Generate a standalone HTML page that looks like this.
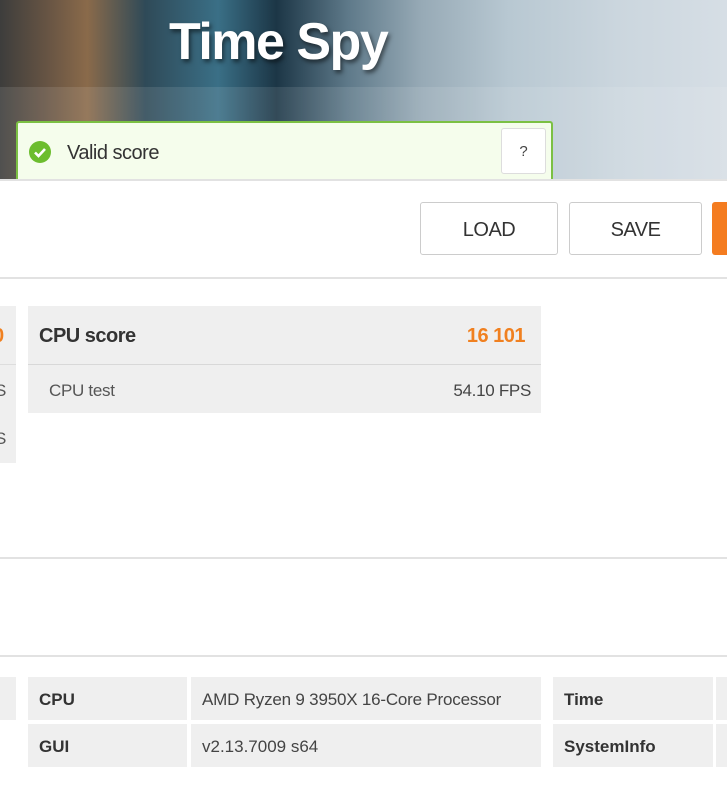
<!DOCTYPE html>
<html><head><meta charset="utf-8"><style>
*{margin:0;padding:0;box-sizing:border-box}
body{width:727px;height:795px;overflow:hidden;background:#fff;font-family:"Liberation Sans",sans-serif;position:relative;color:#333}
.a{position:absolute}
.hdr{left:0;top:0;width:727px;height:180px;background:linear-gradient(90deg,#3d3d3c 0%,#6a5644 7%,#8a6a4a 12%,#2f4a58 20%,#3a6f86 30%,#1c3646 38%,#5f7a8a 48%,#97aab6 58%,#b8c8d2 70%,#cbd6de 85%,#d6dee5 100%)}
.ov{left:0;top:87px;width:727px;height:93px;background:rgba(255,255,255,0.1)}
.title{left:169px;top:12px;font-size:52px;font-weight:bold;color:#fff;text-shadow:2px 3px 4px rgba(0,0,0,.5);letter-spacing:-1.5px}
.valid{left:16px;top:121px;width:537px;height:60px;background:#f5fdec;border:2px solid #7bc043;border-bottom:none;border-radius:3px 3px 0 0}
.q{left:501px;top:128px;width:45px;height:46px;background:#fff;border:1px solid #ddd;border-radius:3px;font-size:15px;text-align:center;line-height:46px;color:#444}
.line{left:0;width:727px;height:2px;background:#e2e2e2}
.btn{top:202px;height:53px;border:1px solid #ccc;border-radius:3px;background:#fff;font-size:20px;text-align:center;line-height:55px;color:#333;letter-spacing:-.5px}
.g{background:#efefef}
</style></head><body>
<div class="a hdr"></div>
<div class="a ov"></div>
<div class="a title">Time Spy</div>
<div class="a valid"></div>
<svg class="a" style="left:29px;top:141px" width="22" height="22" viewBox="0 0 22 22"><circle cx="11" cy="11" r="11" fill="#6cbd2e"/><path d="M6 11.5l3.5 3.5 6.5-7" stroke="#fff" stroke-width="2.6" fill="none"/></svg>
<div class="a" style="left:67px;top:142px;font-size:20px;color:#333;letter-spacing:-.5px">Valid score</div>
<div class="a q">?</div>
<div class="a line" style="top:179px"></div>
<div class="a btn" style="left:420px;width:138px">LOAD</div>
<div class="a btn" style="left:569px;width:133px">SAVE</div>
<div class="a" style="left:712px;top:202px;width:20px;height:53px;background:#f47c20;border-radius:3px"></div>
<div class="a line" style="top:277px"></div>

<div class="a g" style="left:0;top:306px;width:16px;height:157px"></div>
<div class="a" style="left:0;top:364px;width:16px;height:1px;background:#ddd"></div>
<div class="a" style="left:-7px;top:325px;font-size:20px;font-weight:bold;color:#f08020">0</div>
<div class="a" style="left:-5px;top:381px;font-size:17px;color:#555">S</div>
<div class="a" style="left:-5px;top:429px;font-size:17px;color:#555">S</div>

<div class="a g" style="left:28px;top:306px;width:513px;height:107px"></div>
<div class="a" style="left:28px;top:364px;width:513px;height:1px;background:#d8d8d8"></div>
<div class="a" style="left:39px;top:325px;font-size:20px;font-weight:bold;color:#333;letter-spacing:-.5px">CPU score</div>
<div class="a" style="left:400px;width:125px;top:325px;font-size:20px;font-weight:bold;color:#f08020;text-align:right;letter-spacing:-.5px">16 101</div>
<div class="a" style="left:49px;top:381px;font-size:17px;color:#555;letter-spacing:-.3px">CPU test</div>
<div class="a" style="left:400px;width:131px;top:381px;font-size:17px;color:#444;text-align:right;letter-spacing:-.3px">54.10 FPS</div>

<div class="a line" style="top:557px"></div>
<div class="a line" style="top:655px"></div>

<div class="a g" style="left:0;top:677px;width:16px;height:43px"></div>
<div class="a g" style="left:28px;top:677px;width:159px;height:43px"></div>
<div class="a g" style="left:191px;top:677px;width:350px;height:43px"></div>
<div class="a g" style="left:553px;top:677px;width:160px;height:43px"></div>
<div class="a g" style="left:716px;top:677px;width:11px;height:43px"></div>
<div class="a g" style="left:28px;top:724px;width:159px;height:43px"></div>
<div class="a g" style="left:191px;top:724px;width:350px;height:43px"></div>
<div class="a g" style="left:553px;top:724px;width:160px;height:43px"></div>
<div class="a g" style="left:716px;top:724px;width:11px;height:43px"></div>
<div class="a" style="left:39px;top:690px;font-size:17px;font-weight:bold">CPU</div>
<div class="a" style="left:202px;top:690px;font-size:17px;color:#444;letter-spacing:-.2px">AMD Ryzen 9 3950X 16-Core Processor</div>
<div class="a" style="left:564px;top:690px;font-size:17px;font-weight:bold">Time</div>
<div class="a" style="left:39px;top:737px;font-size:17px;font-weight:bold">GUI</div>
<div class="a" style="left:202px;top:737px;font-size:17px;color:#444">v2.13.7009 s64</div>
<div class="a" style="left:564px;top:737px;font-size:17px;font-weight:bold">SystemInfo</div>
</body></html>
